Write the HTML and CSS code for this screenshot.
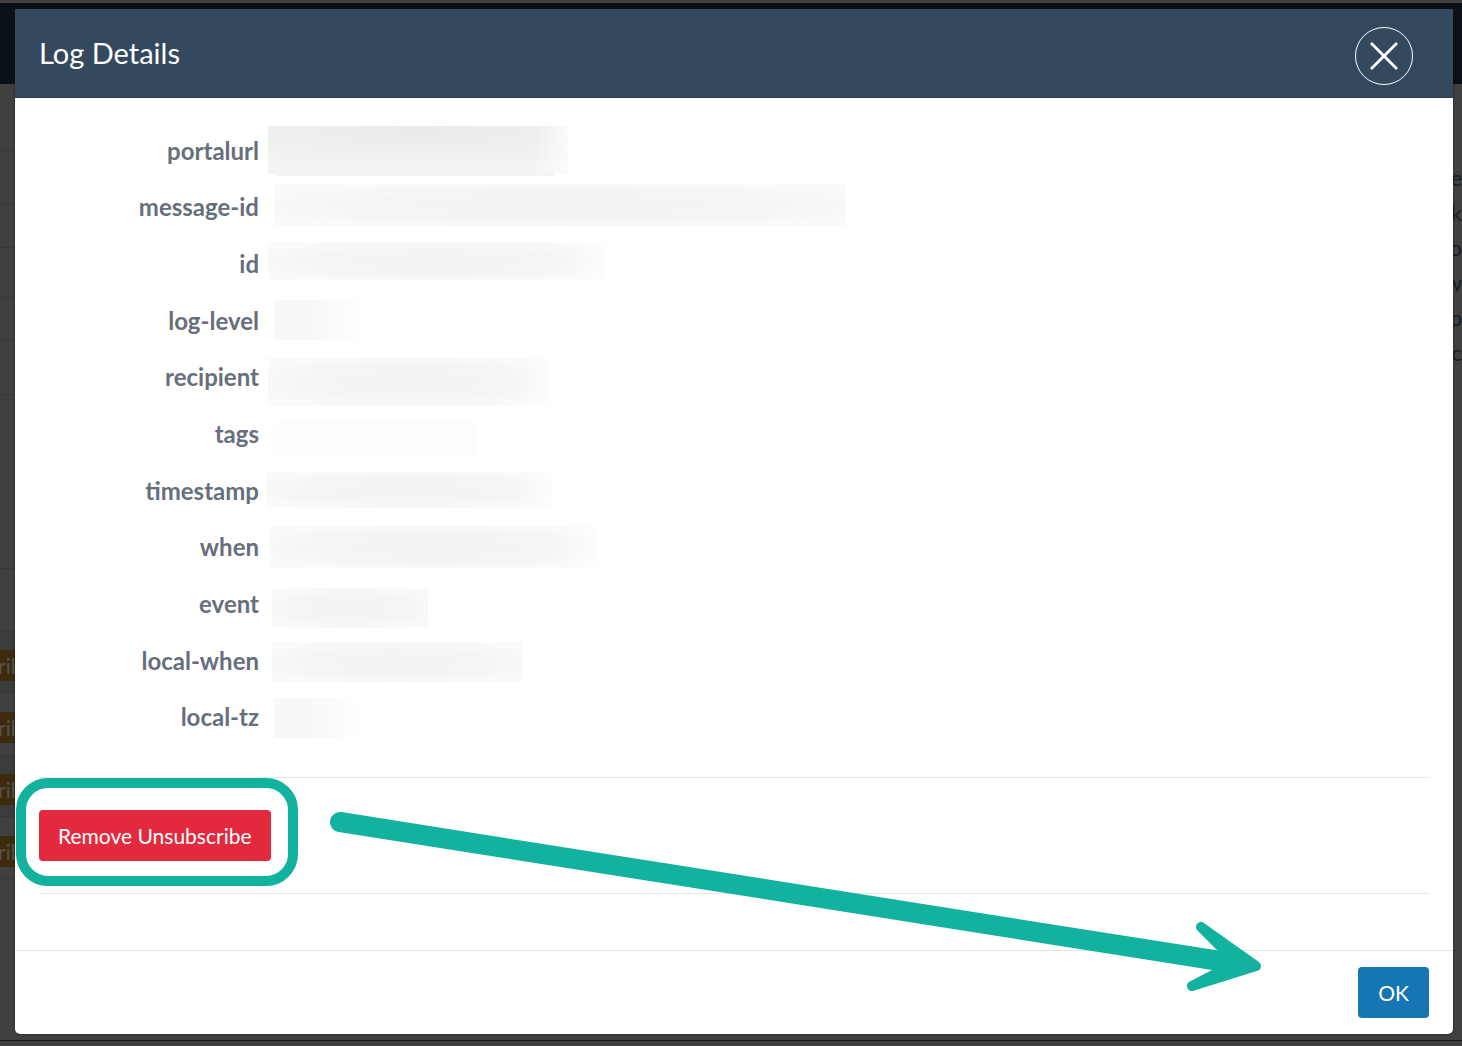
FILE: index.html
```html
<!DOCTYPE html>
<html lang="en">
<head>
    <meta charset="UTF-8">
    <meta name="viewport" content="width=device-width, initial-scale=1.0">
    <title>Log Details</title>
    <link rel="stylesheet" href="styles.css">
</head>
<body>
    <!-- dimmed page behind the dialog -->
    <div class="page" aria-hidden="true">
        <div class="topbar"></div>
        <div class="columns">
            <div class="log-list">
                <div class="line h66"></div>
                <div class="line h54"></div>
                <div class="line h43"></div>
                <div class="line h50"></div>
                <div class="line h43"></div>
                <div class="line h54"></div>
                <div class="line h174"></div>
                <div class="line h62"></div>
                <div class="log-row striped"><span class="tag">rib</span></div>
                <div class="log-row"><span class="tag">rib</span></div>
                <div class="log-row striped"><span class="tag">rib</span></div>
                <div class="log-row"><span class="tag">rib</span></div>
            </div>
            <ul class="side-list">
                <li>e</li>
                <li>k</li>
                <li>o</li>
                <li>w</li>
                <li>p</li>
                <li>c</li>
            </ul>
        </div>
        <div class="bottombar"></div>
    </div>

    <div class="overlay">
        <div class="modal" role="dialog" aria-labelledby="modal-title">
            <div class="modal-header">
                <h1 id="modal-title">Log Details</h1>
                <button class="close" aria-label="Close">
                    <svg width="58" height="58" viewBox="0 0 58 58">
                        <circle cx="29" cy="29" r="28.5" fill="none" stroke="#fff" stroke-width="1"/>
                        <path d="M16 16 L42 42 M42 16 L16 42" stroke="#fff" stroke-width="2.8"/>
                    </svg>
                </button>
            </div>

            <div class="modal-body">
                <svg class="defs" width="0" height="0">
                    <defs>
                        <radialGradient id="smudge" cx="0.5" cy="0.5" r="0.6">
                            <stop offset="0" stop-color="#f3f3f3"/>
                            <stop offset="0.55" stop-color="#f4f4f4"/>
                            <stop offset="1" stop-color="#fafafa"/>
                        </radialGradient>
                        <radialGradient id="smudge-dark" cx="0.5" cy="0" r="0.9">
                            <stop offset="0" stop-color="#e9eaeb"/>
                            <stop offset="0.6" stop-color="#eeefef"/>
                            <stop offset="1" stop-color="#f3f3f3"/>
                        </radialGradient>
                        <linearGradient id="smudge-short">
                            <stop offset="0" stop-color="#f8f8f8"/>
                            <stop offset="0.35" stop-color="#f7f7f7"/>
                            <stop offset="1" stop-color="#fefefe"/>
                        </linearGradient>
                        <linearGradient id="fade">
                            <stop offset="0.88" stop-color="#fff" stop-opacity="0"/>
                            <stop offset="1" stop-color="#fff" stop-opacity="0.7"/>
                        </linearGradient>
                    </defs>
                </svg>

                <dl class="details">
                    <div class="field">
                        <dt>portalurl</dt>
                        <dd><svg width="600" height="56"><rect x="9" y="4" width="300" height="48" fill="url(#smudge-dark)"/><rect x="17" y="52" width="278" height="2" fill="#f3f3f3"/><rect x="9" y="4" width="300" height="48" fill="url(#fade)"/></svg></dd>
                    </div>
                    <div class="field">
                        <dt>message-id</dt>
                        <dd><svg width="600" height="56"><rect x="15" y="5" width="572" height="42" fill="url(#smudge)"/></svg></dd>
                    </div>
                    <div class="field">
                        <dt>id</dt>
                        <dd><svg width="600" height="56"><rect x="9" y="6" width="338" height="38" fill="url(#smudge)"/><rect x="9" y="6" width="338" height="38" fill="url(#fade)"/></svg></dd>
                    </div>
                    <div class="field">
                        <dt>log-level</dt>
                        <dd><svg width="600" height="56"><rect x="15" y="8" width="86" height="40" fill="url(#smudge-short)"/></svg></dd>
                    </div>
                    <div class="field">
                        <dt>recipient</dt>
                        <dd><svg width="600" height="56"><rect x="9" y="9" width="282" height="48" fill="url(#smudge)"/><rect x="9" y="9" width="282" height="48" fill="url(#fade)"/></svg></dd>
                    </div>
                    <div class="field">
                        <dt>tags</dt>
                        <dd><svg width="600" height="56"><rect x="15" y="16" width="202" height="36" fill="#fdfdfd"/></svg></dd>
                    </div>
                    <div class="field">
                        <dt>timestamp</dt>
                        <dd><svg width="600" height="56"><rect x="7" y="10" width="286" height="36" fill="url(#smudge)"/><rect x="7" y="10" width="286" height="36" fill="url(#fade)"/></svg></dd>
                    </div>
                    <div class="field">
                        <dt>when</dt>
                        <dd><svg width="600" height="56"><rect x="11" y="7" width="328" height="42" fill="url(#smudge)"/><rect x="11" y="7" width="328" height="42" fill="url(#fade)"/></svg></dd>
                    </div>
                    <div class="field">
                        <dt>event</dt>
                        <dd><svg width="600" height="56"><rect x="13" y="13" width="156" height="40" fill="url(#smudge)"/></svg></dd>
                    </div>
                    <div class="field">
                        <dt>local-when</dt>
                        <dd><svg width="600" height="56"><rect x="13" y="10" width="250" height="40" fill="url(#smudge)"/></svg></dd>
                    </div>
                    <div class="field">
                        <dt>local-tz</dt>
                        <dd><svg width="600" height="56"><rect x="15" y="9" width="82" height="40" fill="url(#smudge-short)"/></svg></dd>
                    </div>
                </dl>

                <div class="actions">
                    <div class="highlight">
                        <button class="btn btn-danger">Remove Unsubscribe</button>
                    </div>
                    <svg class="arrow" width="940" height="190" viewBox="325 810 940 190" fill="none" stroke="#13b29e" stroke-linecap="round" stroke-linejoin="round">
                        <path d="M340 822 L1220 961" stroke-width="20"/>
                        <path d="M1201 927 L1256 966 L1192 986 L1225 969 L1226 952 Z" fill="#13b29e" stroke-width="10"/>
                    </svg>
                </div>
            </div>

            <div class="modal-footer">
                <button class="btn btn-primary">OK</button>
            </div>
        </div>
    </div>
</body>
</html>
```

FILE: styles.css
```css
* {
    box-sizing: border-box;
}

body {
    margin: 0;
    min-height: 100vh;
    display: grid;
    font-family: Lato, "Open Sans", sans-serif;
    background: #404040;
    color: #666f7b;
    overflow: hidden;
}

/* page and dialog share the same grid cell */
.page,
.overlay {
    grid-area: 1 / 1;
}

.page {
    display: flex;
    flex-direction: column;
    padding-top: 3px;
}

.topbar {
    height: 81px;
    background: #0b1017;
}

.columns {
    flex: 1;
    display: flex;
    justify-content: space-between;
}

.bottombar {
    height: 6px;
    border-top: 1px solid #15171b;
    background: #403d3e;
}

.log-list {
    width: 40px;
}

.line {
    border-bottom: 1px solid #393939;
}

.h43 { height: 43px; }
.h50 { height: 50px; }
.h54 { height: 54px; }
.h62 { height: 62px; }
.h66 { height: 67px; }
.h174 { height: 174px; }

.log-row {
    height: 62px;
    padding-bottom: 11px;
    display: flex;
    align-items: flex-end;
    border-bottom: 1px solid #393939;
}

.striped {
    background: #3a3c3b;
}

.tag {
    width: 40px;
    line-height: 31px;
    font-size: 21px;
    text-indent: -2px;
    background: #3e2b0e;
    color: #55524c;
}

.side-list {
    list-style: none;
    margin: 0;
    padding: 76px 0 0;
    font-size: 22px;
    line-height: 35px;
    text-align: right;
    color: #1a1c1f;
}

.overlay {
    padding: 9px 9px 12px 15px;
    display: flex;
    z-index: 1;
}

.modal {
    flex: 1;
    display: flex;
    flex-direction: column;
    background: #fff;
    border-radius: 0 0 5px 5px;
    box-shadow: 0 0 2px #111;
}

.modal-header {
    height: 89px;
    padding: 0 40px 0 24px;
    display: flex;
    justify-content: space-between;
    align-items: center;
    background: #34495e;
    border-bottom: 1px solid #2c3e50;
    color: #fff;
}

.modal-header h1 {
    margin: 0 0 2px;
    font-size: 29px;
    font-weight: 400;
}

.close {
    width: 58px;
    height: 58px;
    margin-top: 6px;
    padding: 0;
    border: 0;
    background: none;
    cursor: pointer;
}

.close svg {
    display: block;
}

.modal-body {
    flex: 1;
    padding: 24px 24px 0;
}

.defs {
    position: absolute;
}

.details {
    margin: 0 0 32px;
    height: 623px;
    display: grid;
    grid-auto-rows: 1fr;
}

.field {
    display: flex;
    align-items: center;
}

.field dt {
    width: 220px;
    text-align: right;
    font-size: 24px;
    font-weight: 700;
}

.field dd {
    margin: 0;
}

.field svg {
    display: block;
    overflow: visible;
}

.actions {
    position: relative;
    padding: 32px 0;
    border-top: 1px solid #e5e5e5;
    border-bottom: 1px solid #e5e5e5;
}

.highlight {
    position: relative;
    width: max-content;
}

/* ring drawn round the button */
.highlight::before {
    content: "";
    position: absolute;
    inset: -32px -27px -25px -23px;
    border: 10px solid #13b29e;
    border-radius: 32px;
    pointer-events: none;
}

.arrow {
    position: absolute;
    left: 286px;
    top: 32px;
    pointer-events: none;
}

.btn {
    display: block;
    height: 51px;
    min-width: 71px;
    padding: 0 19px;
    border: 0;
    border-radius: 4px;
    font-family: inherit;
    font-size: 21px;
    color: #fff;
    cursor: pointer;
}

.btn-danger {
    background: #e3293e;
}

.btn-primary {
    background: #1675b5;
}

.modal-footer {
    padding: 16px 24px;
    display: flex;
    justify-content: flex-end;
    border-top: 1px solid #e5e5e5;
}
```
